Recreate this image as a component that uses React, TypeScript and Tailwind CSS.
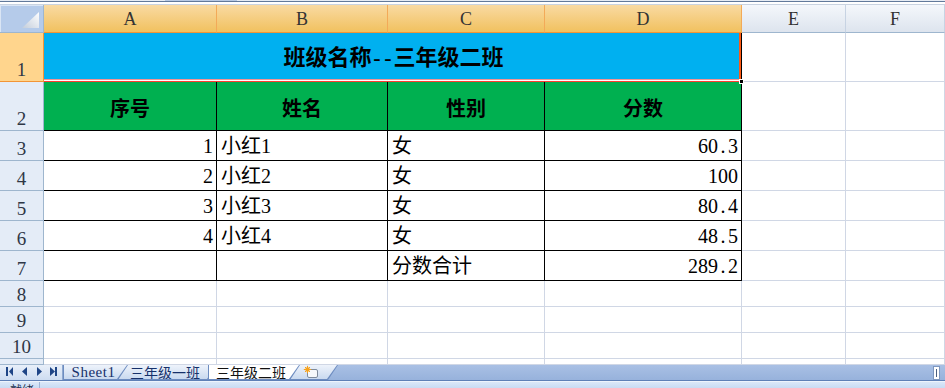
import type { ReactNode } from 'react';
import clsx from 'clsx';

const rows = [
  { n: 3, a: '1', b: '小红1', c: '女', d: '60.3' },
  { n: 4, a: '2', b: '小红2', c: '女', d: '100' },
  { n: 5, a: '3', b: '小红3', c: '女', d: '80.4' },
  { n: 6, a: '4', b: '小红4', c: '女', d: '48.5' },
  { n: 7, a: '', b: '', c: '分数合计', d: '289.2' },
];

const grid = 'border-r border-b border-[#d0d7e5]';
const black = 'border-r border-b border-black';

// SimSun style digits: every char is half an em, the dot too
const Num = ({ v }: { v: string }) => (
  <span>
    {v.split('').map((ch, i) =>
      ch === '.' ? (
        <span key={i} className="inline-block w-[10px] text-center">
          .
        </span>
      ) : (
        ch
      )
    )}
  </span>
);

const RowHead = ({ n, selected }: { n?: number; selected?: boolean }) => (
  <div
    className={clsx(
      'flex items-end justify-center pb-[2px] border-r border-b text-[19px] leading-none text-[#2f3746]',
      selected ? 'bg-[#ffd58d] border-[#f29536]' : 'bg-[#e4ecf7] border-[#9eb6ce]'
    )}
  >
    {n}
  </div>
);

const ColHead = ({ label, selected }: { label: string; selected?: boolean }) => (
  <div
    className={clsx(
      'flex items-center justify-center border-r border-b text-[18px] leading-none text-[#333]',
      selected
        ? 'bg-[linear-gradient(#f9daa2,#f1c15f)] border-r-[#f3aa58] border-b-[#f29536]'
        : 'bg-[linear-gradient(#f4f7fb,#dde4ee)] border-r-[#c7d3e3] border-b-[#9eb6ce]'
    )}
  >
    {label}
  </div>
);

const Cell = ({
  children,
  className,
}: {
  children?: ReactNode;
  className?: string;
}) => <div className={clsx('flex items-end leading-none text-[20px] pb-[4px]', className)}>{children}</div>;

const Tab = ({
  children,
  w,
  first,
  active,
  z,
}: {
  children: ReactNode;
  w: string;
  first?: boolean;
  active?: boolean;
  z: string;
}) => (
  <div
    className={clsx(
      'h-full bg-[#6d8cc0] pl-px pr-px pb-px [clip-path:polygon(0_0,100%_0,calc(100%_-_10px)_100%,0_100%)]',
      w,
      z,
      !first && '-ml-[10px]'
    )}
  >
    <div
      className={clsx(
        'h-full flex items-center justify-center pr-[6px] [clip-path:polygon(0_0,100%_0,calc(100%_-_10px)_100%,0_100%)]',
        active ? 'bg-white text-[#111]' : 'bg-[linear-gradient(#eef3fb,#c9d9ef)] text-[#16306a]'
      )}
    >
      {children}
    </div>
  </div>
);

export default function App() {
  return (
    <div className="w-[945px] h-[388px] overflow-hidden bg-white flex flex-col font-['Liberation_Serif','Noto_Sans_CJK_SC',serif] text-black">
      {/* strip left of the formula bar */}
      <div className="h-[5px] flex flex-col shrink-0">
        <div className="h-px bg-[#e6ecf4] flex">
          <div className="ml-[165px] w-[72px] bg-[#b7c9e4]" />
        </div>
        <div className="h-px bg-[#62799a]" />
        <div className="h-[2px] bg-white" />
        <div className="h-px bg-[#c9d3e1]" />
      </div>

      <div className="grid grid-cols-[44px_173px_171px_157px_197px_104px_99px] grid-rows-[28px_49px_49px_30px_30px_30px_30px_30px_26px_26px_26px_6px] shrink-0">
        {/* column headers */}
        <div className="border-r border-b border-[#9eb6ce] bg-[#b5cbea] shadow-[inset_1px_1px_0_#dae5f4]">
          <svg width="43" height="27" viewBox="0 0 43 27">
            <defs>
              <linearGradient id="tri" x1="1" y1="0" x2="0" y2="1">
                <stop offset="0" stopColor="#ffffff" />
                <stop offset="1" stopColor="#c3cddb" />
              </linearGradient>
            </defs>
            <polygon points="39,7 39,23 22,23" fill="url(#tri)" />
          </svg>
        </div>
        <ColHead label="A" selected />
        <ColHead label="B" selected />
        <ColHead label="C" selected />
        <ColHead label="D" selected />
        <ColHead label="E" />
        <ColHead label="F" />

        {/* row 1: merged title, selected */}
        <RowHead n={1} selected />
        <div className="col-span-4 relative flex items-center justify-center bg-[#00b0f0] border-r border-r-black border-b border-b-[#ff3b30] shadow-[inset_-2px_0_0_#ff5a14,inset_0_-1px_0_#ffffff,inset_0_-2px_0_#f49393] text-[22px] font-bold leading-none pt-[2px] pl-[2px]">
          班级名称<span className="inline-block w-[11px] text-center">-</span>
          <span className="inline-block w-[11px] text-center">-</span>三年级二班
          <span className="absolute right-[-3px] bottom-[-3px] w-[5px] h-[5px] bg-black border border-white" />
        </div>
        <div className={grid} />
        <div className={grid} />

        {/* row 2: headers */}
        <RowHead n={2} />
        {['序号', '姓名', '性别', '分数'].map((h) => (
          <div
            key={h}
            className={clsx(black, 'bg-[#00b050] flex items-center justify-center pt-[6px] text-[20px] font-bold leading-none')}
          >
            {h}
          </div>
        ))}
        <div className={grid} />
        <div className={grid} />

        {/* rows 3-7 */}
        {rows.map((r) => (
          <div key={r.n} className="contents">
            <RowHead n={r.n} />
            <Cell className={clsx(black, 'justify-end pr-[3px]')}>
              <Num v={r.a} />
            </Cell>
            <Cell className={clsx(black, 'pl-[4px]')}>{r.b}</Cell>
            <Cell className={clsx(black, 'pl-[4px]')}>{r.c}</Cell>
            <Cell className={clsx(black, 'justify-end pr-[3px]')}>
              <Num v={r.d} />
            </Cell>
            <div className={grid} />
            <div className={grid} />
          </div>
        ))}

        {/* empty rows */}
        {[8, 9, 10, undefined].map((n, i) => (
          <div key={i} className="contents">
            <RowHead n={n} />
            <div className={grid} />
            <div className={grid} />
            <div className={grid} />
            <div className={grid} />
            <div className={grid} />
            <div className={grid} />
          </div>
        ))}
      </div>

      {/* sheet tabs */}
      <div className="h-[16px] shrink-0 flex bg-[linear-gradient(#a9c0e4,#97b2dc)] border-b border-[#5f80b6]">
        <div className="w-[63px] h-full bg-[linear-gradient(#e8eff9,#cddcf1)] border-r border-[#8ea8cf]">
          <svg width="62" height="15" viewBox="0 0 62 15" fill="#1f4586">
            <rect x="6" y="2" width="2" height="9" />
            <polygon points="13,2 9,6.5 13,11" />
            <polygon points="27,2 22,6.5 27,11" />
            <polygon points="37,2 42,6.5 37,11" />
            <polygon points="50,2 55,6.5 50,11" />
            <rect x="55" y="2" width="2" height="9" />
          </svg>
        </div>
        <Tab w="w-[65px]" first z="z-[3]">
          <span className="text-[15px] leading-none pl-[2px] tracking-[0.5px]">Sheet1</span>
        </Tab>
        <Tab w="w-[100px]" z="z-[2]">
          <span className="text-[14px] leading-none font-['Noto_Sans_CJK_SC',sans-serif]">三年级一班</span>
        </Tab>
        <Tab w="w-[92px]" active z="z-[4]">
          <span className="text-[14px] leading-none font-['Noto_Sans_CJK_SC',sans-serif]">三年级二班</span>
        </Tab>
        <Tab w="w-[48px]" z="z-[1]">
          <svg width="16" height="14" viewBox="0 0 16 14">
            <rect x="4.5" y="4.5" width="10" height="8" rx="1.5" fill="#f6f8fb" stroke="#7f8b9c" />
            <circle cx="4.5" cy="4.5" r="2.2" fill="#f7a21b" />
            <path d="M4.5 0.8v7.4M0.8 4.5h7.4M2 2l5 5M7 2l-5 5" stroke="#f7a21b" strokeWidth="1" />
          </svg>
        </Tab>
        <div className="flex-1" />
        <div className="w-[7px] h-[14px] mt-px mr-[5px] bg-white border border-[#7e97bf] flex justify-center items-center">
          <div className="w-px h-[8px] bg-[#4a5f80]" />
        </div>
      </div>

      {/* status bar (cut off at the window edge, as in the shot) */}
      <div className="h-[7px] shrink-0 overflow-hidden flex bg-[linear-gradient(#dbe8f8,#c9dbf3)] border-t border-[#eef4fc]">
        <div className="w-[40px] border-r border-[#9fb5d6] pl-[10px] pt-[2px] text-[12px] leading-none text-[#1d2d4a] font-['Noto_Sans_CJK_SC',sans-serif]">
          就绪
        </div>
      </div>
    </div>
  );
}
